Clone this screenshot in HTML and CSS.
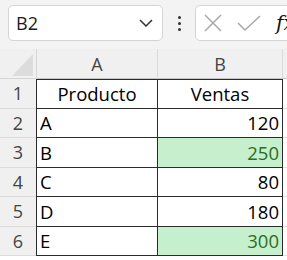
FILE: index.html
```html
<!DOCTYPE html>
<html>
<head>
<meta charset="utf-8">
<link rel="stylesheet" href="styles.css">
</head>
<body>
<div class="toolbar">
  <div class="namebox">
    <span class="name">B2</span>
    <svg class="chev" width="14" height="8" viewBox="0 0 14 8"><path d="M1 1 L7 7 L13 1" fill="none" stroke="#333" stroke-width="1.5"/></svg>
  </div>
  <div class="dots"><i></i><i></i><i></i></div>
  <div class="fbox">
    <svg class="ico" width="20" height="20" viewBox="0 0 20 20"><path d="M2 2 L18 18 M18 2 L2 18" stroke="#a8a8a8" stroke-width="1.5" fill="none"/></svg>
    <svg class="ico" width="26" height="20" viewBox="0 0 26 20"><path d="M2 10 L9 17 L24 3" stroke="#a8a8a8" stroke-width="1.5" fill="none"/></svg>
    <span class="fx">fx</span>
  </div>
</div>
<div class="sheet">
  <div class="corner"><span class="tri"></span></div>
  <div class="colh">A</div>
  <div class="colh">B</div>
  <div class="colh rest"></div>

  <div class="rowh">1</div>
  <div class="cell a top center">Producto</div>
  <div class="cell b top center">Ventas</div>
  <div class="grid"></div>

  <div class="rowh">2</div>
  <div class="cell a">A</div>
  <div class="cell b num">120</div>
  <div class="grid"></div>

  <div class="rowh">3</div>
  <div class="cell a">B</div>
  <div class="cell b num hi">250</div>
  <div class="grid"></div>

  <div class="rowh">4</div>
  <div class="cell a">C</div>
  <div class="cell b num">80</div>
  <div class="grid"></div>

  <div class="rowh">5</div>
  <div class="cell a">D</div>
  <div class="cell b num">180</div>
  <div class="grid"></div>

  <div class="rowh">6</div>
  <div class="cell a">E</div>
  <div class="cell b num hi">300</div>
  <div class="grid"></div>
</div>
</body>
</html>
```
FILE: styles.css
```css
html, body {
  margin: 0;
  padding: 0;
  overflow: hidden;
  background: #ffffff;
  font-family: "Open Sans", "Noto Sans", sans-serif;
}
.toolbar {
  height: 49px;
  box-sizing: border-box;
  padding: 5px 0 0 8px;
  background: #f3f3f3;
  display: flex;
  align-items: flex-start;
  width: 400px;
}
.namebox {
  width: 155px;
  height: 36px;
  box-sizing: border-box;
  background: #fff;
  border: 1px solid #d4d4d4;
  border-radius: 5px;
  display: flex;
  align-items: center;
  justify-content: space-between;
  padding: 0 9px 0 7px;
}
.name {
  font-size: 18px;
  color: #1a1a1a;
}
.dots {
  width: 32px;
  height: 36px;
  display: flex;
  flex-direction: column;
  align-items: center;
  justify-content: center;
  gap: 3px;
}
.dots i {
  display: block;
  width: 3px;
  height: 3px;
  border-radius: 50%;
  background: #333;
}
.fbox {
  width: 160px;
  height: 36px;
  box-sizing: border-box;
  background: #fff;
  border: 1px solid #d4d4d4;
  border-radius: 5px;
  display: flex;
  align-items: center;
  padding-left: 7px;
  gap: 13px;
}
.fx {
  font-family: "DejaVu Serif", serif;
  font-style: italic;
  font-size: 20px;
  color: #111;
  margin-left: 1px;
}
.sheet {
  display: grid;
  grid-template-columns: 37px 121px 125px 10px;
  grid-template-rows: 30px repeat(6, 29.5px);
  background: #fff;
}
.corner {
  background: #f0f0f0;
  border-right: 1px solid #d6d6d6;
  border-bottom: 1px solid #d6d6d6;
  box-sizing: border-box;
  position: relative;
}
.tri {
  position: absolute;
  left: 12px;
  top: 5px;
  width: 21px;
  height: 22px;
  background: #dcdcdc;
  clip-path: polygon(100% 0, 100% 100%, 0 100%);
}
.colh {
  background: #f0f0f0;
  border-right: 1px solid #dadada;
  border-bottom: 1px solid #c6c6c6;
  box-sizing: border-box;
  display: flex;
  align-items: center;
  justify-content: center;
  font-size: 18px;
  color: #444;
}
.colh.rest {
  border-right: none;
}
.rowh {
  background: #f0f0f0;
  border-right: 1px solid #d0d0d0;
  border-bottom: 1px solid #dcdcdc;
  box-sizing: border-box;
  display: flex;
  align-items: center;
  justify-content: center;
  font-size: 18px;
  color: #444;
}
.cell {
  box-sizing: border-box;
  border-right: 1.5px solid #2b2b2b;
  border-bottom: 1.5px solid #2b2b2b;
  display: flex;
  align-items: center;
  padding: 0 3px;
  font-size: 18.5px;
  color: #000;
}
.cell.a {
  border-left: 1px solid #2b2b2b;
  margin-left: -1px;
}
.cell.top {
  border-top: 1px solid #2b2b2b;
}
.cell.center {
  justify-content: center;
}
.cell.num {
  justify-content: flex-end;
}
.cell.hi {
  background: #c6efce;
  color: #2b6e1c;
}
.grid {
  border-bottom: 1px solid #e0e0e0;
  box-sizing: border-box;
}
```
